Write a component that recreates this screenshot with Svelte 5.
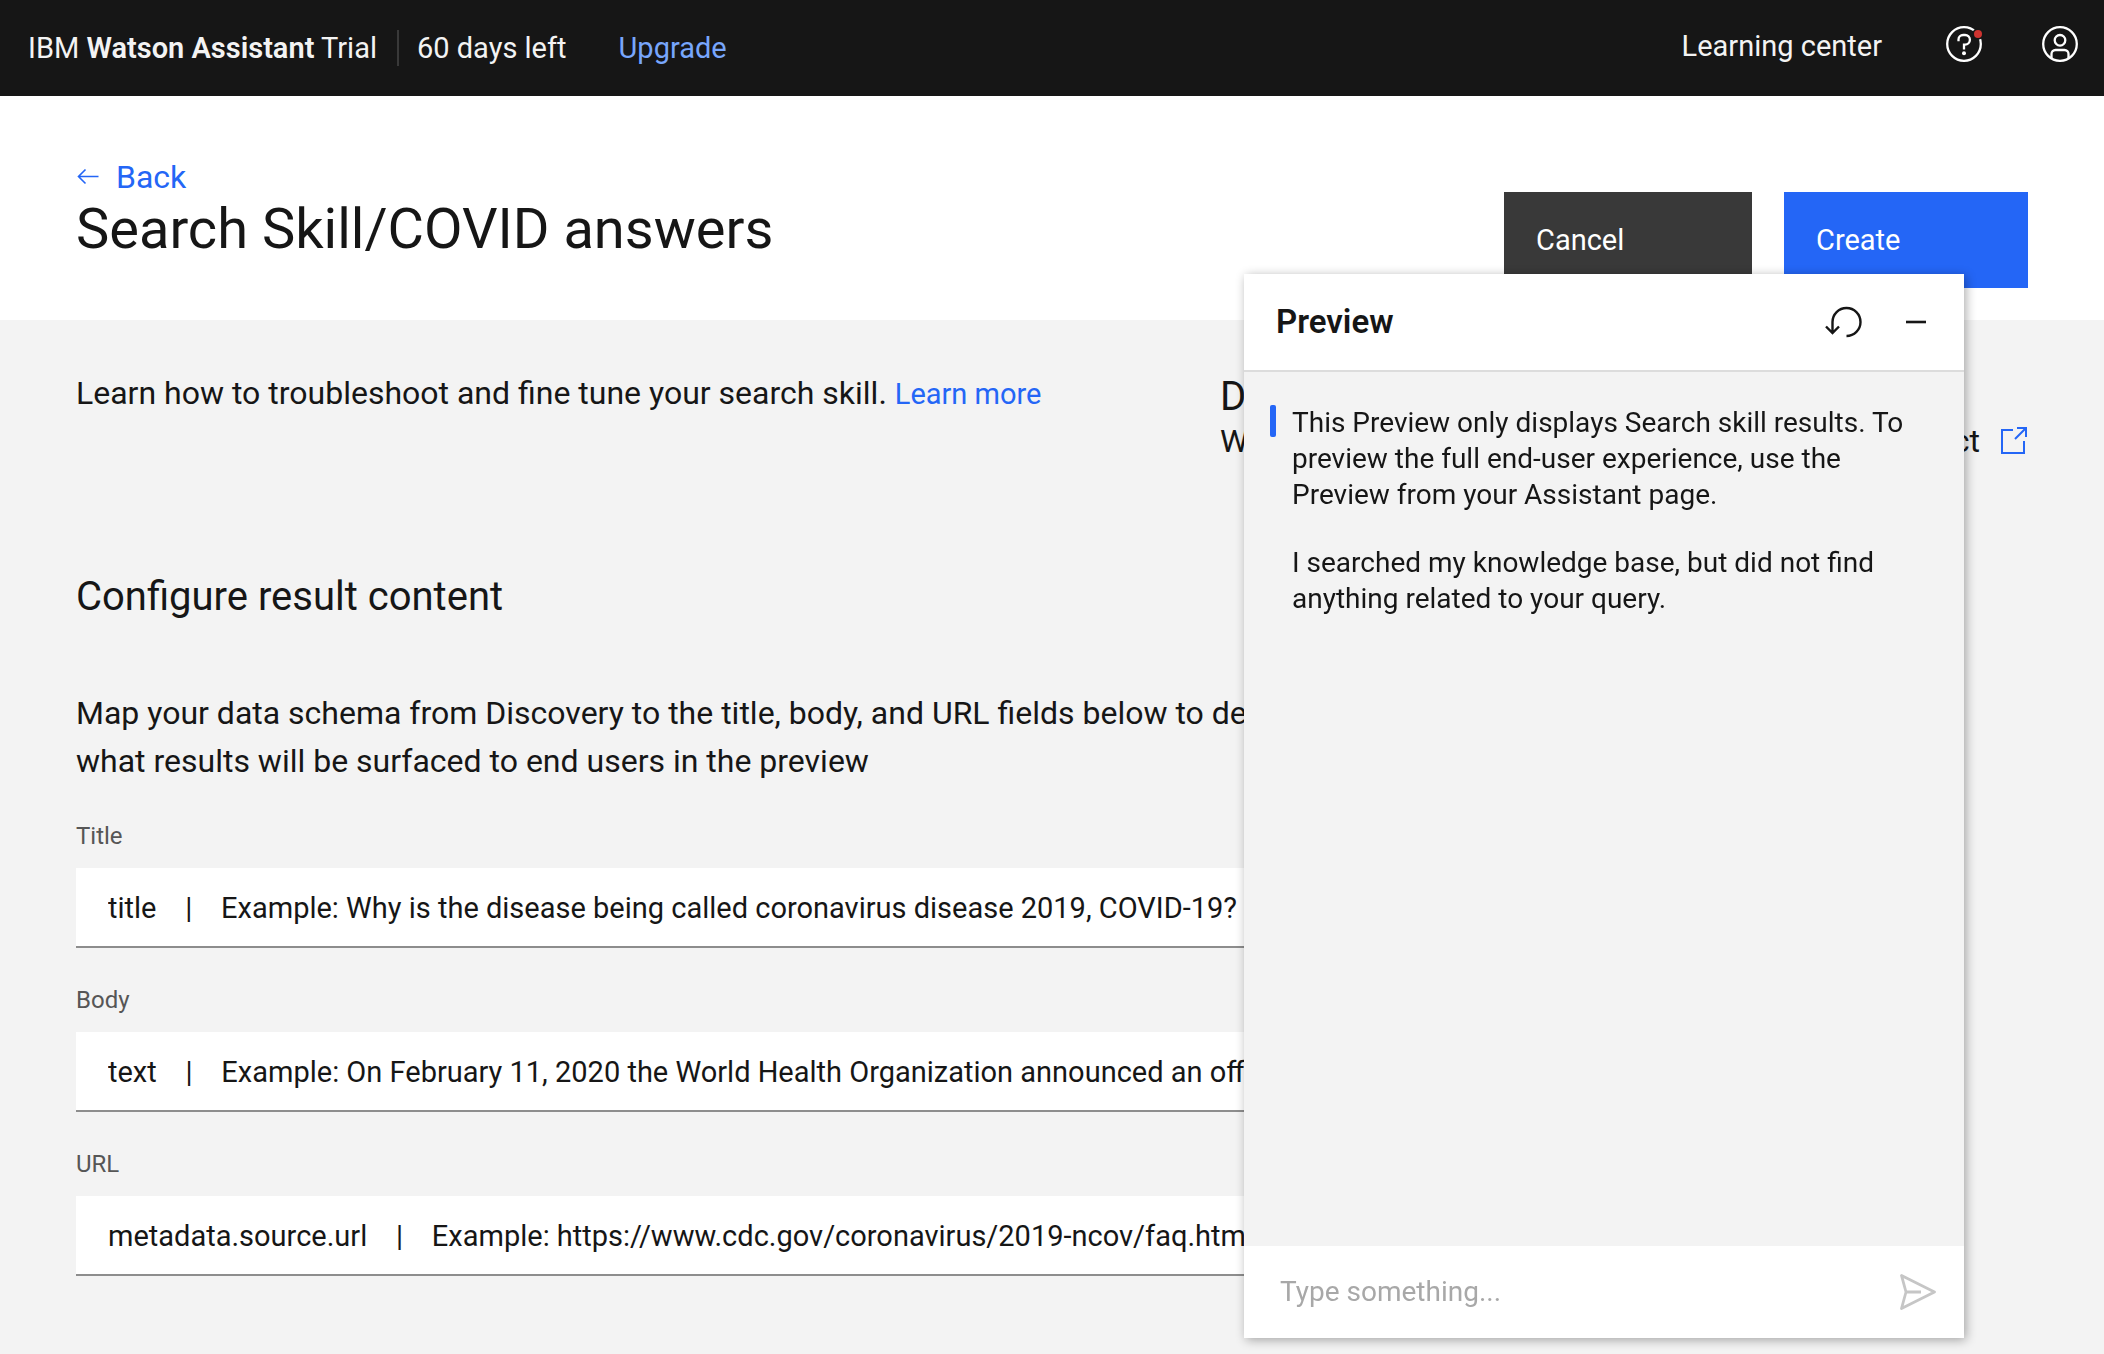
<script>
  const gap = '\u00a0'.repeat(4);
  const fields = [
    { id: 'title', label: 'Title', source: 'title', example: 'Why is the disease being called coronavirus disease 2019, COVID-19?' },
    { id: 'body', label: 'Body', source: 'text', example: 'On February 11, 2020 the World Health Organization announced an official name' },
    { id: 'url', label: 'URL', source: 'metadata.source.url', example: 'https://www.cdc.gov/coronavirus/2019-ncov/faq.html' }
  ];
  const messages = [
    'This Preview only displays Search skill results. To preview the full end-user experience, use the Preview from your Assistant page.',
    'I searched my knowledge base, but did not find anything related to your query.'
  ];
</script>

<div class="page">
  <header class="topbar">
    <div class="brand">
      <span>IBM <strong>Watson Assistant</strong> Trial</span>
      <span class="days">60 days left</span>
      <a class="upgrade" href="#upgrade">Upgrade</a>
    </div>
    <nav class="tools">
      <a class="learning" href="#learning">Learning center</a>
      <button class="icon-button" aria-label="Help">
        <svg width="40" height="40" viewBox="0 0 40 40" fill="none" stroke="#fff" stroke-width="2.3">
          <circle cx="20" cy="20" r="16.8" />
          <path d="M14.5 17.3v-1.7a4.6 4.6 0 0 1 4.6-4.6h2a4.8 4.8 0 0 1 0 9.6H20v5" />
          <circle cx="20" cy="29.3" r="2" fill="#fff" stroke="none" />
          <circle cx="34" cy="10" r="5.8" fill="#161616" stroke="none" />
          <circle cx="34" cy="10" r="4" fill="#cf3430" stroke="none" />
        </svg>
      </button>
      <button class="icon-button" aria-label="Account">
        <svg width="40" height="40" viewBox="0 0 40 40" fill="none" stroke="#fff" stroke-width="2.3">
          <circle cx="20" cy="20" r="16.8" />
          <circle cx="20" cy="16.3" r="5.3" />
          <path d="M11.5 34.5V30a4 4 0 0 1 4-4h9a4 4 0 0 1 4 4v4.5" />
        </svg>
      </button>
    </nav>
  </header>

  <section class="hero">
    <div class="heading">
      <a class="back" href="#back">
        <svg width="24" height="24" viewBox="0 0 24 24" fill="none" stroke="currentColor" stroke-width="1.6">
          <path d="M22.5 11.5H2.5M9.5 4.5l-7 7 7 7" />
        </svg>
        Back
      </a>
      <h1>Search Skill/COVID answers</h1>
    </div>
    <div class="actions">
      <button class="action cancel">Cancel</button>
      <button class="action create">Create</button>
    </div>
  </section>

  <main>
    <div class="intro">
      <p class="lead">Learn how to troubleshoot and fine tune your search skill. <a href="#more">Learn more</a></p>
      <div class="discovery">
        <h2>D</h2>
        <p class="project">
          <span>W</span>
          <span class="project-name">ct</span>
          <a href="#project" aria-label="Open project">
            <svg width="28" height="28" viewBox="0 0 28 28" fill="none" stroke="currentColor" stroke-width="2">
              <path d="M13 3H2v23h22V14M17 1h9v9M26 1 15 12" />
            </svg>
          </a>
        </p>
      </div>
    </div>

    <h2 class="section-title">Configure result content</h2>
    <p class="description">Map your data schema from Discovery to the title, body, and URL fields below to determine what results will be surfaced to end users in the preview</p>

    <form class="fields">
      {#each fields as field}
        <div class="field">
          <label for={field.id}>{field.label}</label>
          <select id={field.id}>
            <option>{field.source}{gap}|{gap}Example: {field.example}</option>
          </select>
        </div>
      {/each}
    </form>
  </main>

  <aside class="preview" aria-label="Preview">
    <div class="preview-head">
      <h2>Preview</h2>
      <button class="icon-button" aria-label="Restart conversation">
        <svg width="40" height="40" viewBox="0 0 40 40" fill="none" stroke="#161616" stroke-width="2.4">
          <path d="M22.5 34a14 14 0 1 0-14-14v11M2 24.5l6.5 6.5 6.5-6.5" />
        </svg>
      </button>
      <button class="icon-button" aria-label="Minimize">
        <svg width="40" height="40" viewBox="0 0 40 40" stroke="#161616" stroke-width="2.6">
          <path d="M10 20h20" />
        </svg>
      </button>
    </div>
    <div class="messages">
      {#each messages as message, i}
        <p class:marked={i === 0}>{message}</p>
      {/each}
    </div>
    <form class="composer">
      <input type="text" aria-label="Message" placeholder="Type something..." />
      <button class="icon-button" type="button" aria-label="Send">
        <svg width="40" height="40" viewBox="0 0 40 40" fill="none" stroke="#c6c6c6" stroke-width="2.8" stroke-linejoin="round">
          <path d="M3.5 3.5l33 16.5-33 16.5L8 20zM8 20h15" />
        </svg>
      </button>
    </form>
  </aside>
</div>

<style>
  :global(body) {
    background: #f3f3f3;
  }
  .page {
    min-height: 100vh;
    color: #161616;
    font-family: Roboto, "Liberation Sans", sans-serif;
    font-size: 32px;
    line-height: 48px;
  }
  h1, h2, p {
    margin: 0;
    font-weight: 400;
  }
  a {
    color: #2466f6;
    text-decoration: none;
  }
  button, input, select {
    margin: 0;
    border: 0;
    border-radius: 0;
    font: inherit;
    color: inherit;
  }
  svg {
    display: block;
  }
  .icon-button {
    padding: 0;
    background: none;
    cursor: pointer;
  }

  .topbar {
    display: flex;
    justify-content: space-between;
    height: 96px;
    padding: 0 24px 0 28px;
    box-sizing: border-box;
    background: #161616;
    color: #f3f3f3;
    font-size: 29px;
    line-height: 36px;
  }
  .brand {
    display: flex;
    align-items: center;
  }
  strong {
    font-weight: 600;
  }
  .days {
    margin-left: 20px;
    padding-left: 18px;
    border-left: 2px solid #393939;
  }
  .upgrade {
    margin-left: 52px;
    color: #78a6fc;
  }
  .tools {
    display: flex;
    align-items: center;
    gap: 56px;
    padding-bottom: 8px;
  }
  .learning {
    padding-top: 4px;
    margin-right: 6px;
    color: #f3f3f3;
  }

  .hero {
    display: flex;
    justify-content: space-between;
    height: 224px;
    padding: 0 76px;
    box-sizing: border-box;
    background: #fff;
  }
  .heading {
    padding-top: 61px;
  }
  .back {
    display: flex;
    align-items: center;
    gap: 16px;
    line-height: 40px;
  }
  h1 {
    font-size: 56px;
    line-height: 64px;
  }
  .actions {
    display: flex;
    gap: 32px;
    padding-top: 96px;
  }
  .action {
    height: 96px;
    padding: 0 32px;
    color: #fff;
    font-size: 29px;
    text-align: left;
    cursor: pointer;
  }
  .cancel {
    width: 248px;
    background: #393939;
  }
  .create {
    width: 244px;
    background: #2466f6;
  }

  main {
    padding: 49px 76px 72px;
  }
  .intro {
    display: flex;
    justify-content: space-between;
  }
  .lead a {
    font-size: 29px;
  }
  .discovery {
    width: 808px;
    padding-top: 4px;
  }
  .discovery h2, .section-title {
    font-size: 40px;
    line-height: 48px;
  }
  .project {
    display: flex;
    align-items: center;
    line-height: 40px;
  }
  .project-name {
    margin-left: auto;
    margin-right: 20px;
  }
  .section-title {
    margin-top: 112px;
  }
  .description {
    max-width: 1300px;
    margin-top: 68px;
  }
  .fields {
    display: grid;
    gap: 36px;
    max-width: 1300px;
    margin-top: 35px;
  }
  .field {
    display: grid;
    gap: 16px;
  }
  label {
    color: #565656;
    font-size: 24px;
    line-height: 32px;
  }
  select {
    width: 100%;
    height: 80px;
    padding: 2px 32px 0;
    border-bottom: 2px solid #8d8d8d;
    background: #fff;
    font-size: 29px;
    appearance: none;
  }

  .preview {
    position: fixed;
    right: 140px;
    bottom: 16px;
    display: flex;
    flex-direction: column;
    width: 720px;
    height: calc(100vh - 290px);
    background: #f3f3f3;
    box-shadow: 2px 2px 10px rgba(0, 0, 0, 0.33);
  }
  .preview-head {
    display: flex;
    align-items: center;
    gap: 32px;
    height: 96px;
    padding: 0 28px 0 32px;
    border-bottom: 2px solid #dcdcdc;
    background: #fff;
  }
  .preview-head h2 {
    flex: 1;
    font-size: 33px;
    font-weight: 600;
  }
  .messages {
    display: grid;
    gap: 32px;
    flex: 1;
    align-content: start;
    padding: 33px 44px 32px 26px;
    font-size: 28px;
    line-height: 36px;
  }
  .messages p {
    position: relative;
    padding-left: 22px;
  }
  .marked::before {
    content: "";
    position: absolute;
    top: 0;
    left: 0;
    width: 6px;
    height: 32px;
    border-radius: 2px;
    background: #2466f6;
  }
  .composer {
    display: flex;
    align-items: center;
    height: 92px;
    padding: 0 26px 0 36px;
    background: #fff;
  }
  input {
    flex: 1;
    min-width: 0;
    padding: 0;
    background: none;
    font-size: 28px;
  }
  input::placeholder {
    color: #a8a8a8;
  }
</style>
